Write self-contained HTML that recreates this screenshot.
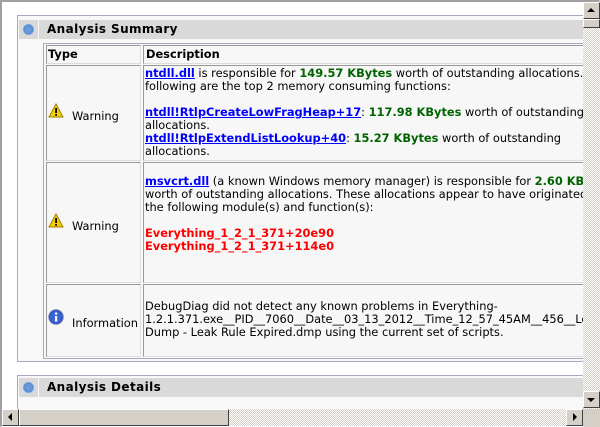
<!DOCTYPE html>
<html><head><style>
*{margin:0;padding:0;box-sizing:border-box}
body{width:600px;height:427px;overflow:hidden;background:#fff;font-family:"DejaVu Sans","Liberation Sans",sans-serif;font-size:11.4px;color:#000;position:relative}
.frame{position:absolute;left:0;top:0;width:600px;height:427px;border-top:2px solid #a0a0a0;border-left:2px solid #a0a0a0;border-right:1px solid #fff;border-bottom:1px solid #fff}
.abs{position:absolute}
.sec{position:absolute;left:17px;width:580px;border:1px solid #a8a8c0;background:#f8f8f8}
.hdr{position:absolute;height:19px;background:#d9d9d9;font-weight:bold;font-size:12px;line-height:19px;padding-left:8px;letter-spacing:0.4px}
.ic{position:absolute;width:19px;height:19px;background:#d9d9d9}
.ic:after{content:"";position:absolute;left:4px;top:4px;width:11px;height:11px;border-radius:50%;background:radial-gradient(circle at 50% 50%,#6fa0e0 0,#5a8fd8 60%,#a8c4ee 75%,#5a8fd8 100%)}
.cell{position:absolute;border:1px solid #999;border-right-color:#ddd;border-bottom-color:#ddd;background:#f7f7f7}
.t{position:absolute;line-height:13px;white-space:nowrap}
a{color:#00f;font-weight:bold;text-decoration:underline}
.g{color:#006400;font-weight:bold}
.r{color:#f00;font-weight:bold}
.sb{background:repeating-conic-gradient(#fff 0 25%,#d4d0c8 0 50%) 0 0/2px 2px}
.btn{position:absolute;width:17px;height:17px;background:#d4d0c8;border:1px solid;border-color:#fff #404040 #404040 #fff}
</style></head><body>
<div class="frame"></div>
<div class="sec" style="top:15px;height:347px">
</div>
<div class="ic" style="left:19px;top:20px"></div>
<div class="hdr" style="left:39px;top:20px;width:544px">Analysis Summary</div>
<div class="abs" style="left:43px;top:43px;width:545px;height:316px;border:1px solid #a8a8c0;background:#f8f8f8"></div>
<div class="cell" style="left:46px;top:45px;width:95px;height:19px"></div>
<div class="cell" style="left:143px;top:45px;width:450px;height:19px"></div>
<div class="t" style="left:48px;top:48px;font-weight:bold">Type</div>
<div class="t" style="left:146px;top:48px;font-weight:bold">Description</div>

<div class="cell" style="left:46px;top:65px;width:95px;height:96px"></div>
<div class="cell" style="left:143px;top:65px;width:450px;height:96px"></div>
<svg class="abs" style="left:48px;top:103px" width="16" height="15"><path d="M8 1 L15 14 L1 14 Z" fill="#f5d000" stroke="#a08000" stroke-width="1"/><rect x="7.2" y="5" width="1.8" height="5" fill="#000"/><rect x="7.2" y="11" width="1.8" height="1.8" fill="#000"/></svg>
<div class="t" style="left:72px;top:110px">Warning</div>
<div class="t" style="left:145px;top:67px"><a>ntdll.dll</a> is responsible for <span class="g">149.57 KBytes</span> worth of outstanding allocations. The<br>following are the top 2 memory consuming functions:<br><br><a>ntdll!RtlpCreateLowFragHeap+17</a>: <span class="g">117.98 KBytes</span> worth of outstanding<br>allocations.<br><a>ntdll!RtlpExtendListLookup+40</a>: <span class="g">15.27 KBytes</span> worth of outstanding<br>allocations.</div>

<div class="cell" style="left:46px;top:162px;width:95px;height:121px"></div>
<div class="cell" style="left:143px;top:162px;width:450px;height:121px"></div>
<svg class="abs" style="left:48px;top:213px" width="16" height="15"><path d="M8 1 L15 14 L1 14 Z" fill="#f5d000" stroke="#a08000" stroke-width="1"/><rect x="7.2" y="5" width="1.8" height="5" fill="#000"/><rect x="7.2" y="11" width="1.8" height="1.8" fill="#000"/></svg>
<div class="t" style="left:72px;top:220px">Warning</div>
<div class="t" style="left:145px;top:175px"><a>msvcrt.dll</a> (a known Windows memory manager) is responsible for <span class="g">2.60 KBytes</span><br>worth of outstanding allocations. These allocations appear to have originated from<br>the following module(s) and function(s):<br><br><span class="r">Everything_1_2_1_371+20e90</span><br><span class="r">Everything_1_2_1_371+114e0</span></div>

<div class="cell" style="left:46px;top:284px;width:95px;height:73px"></div>
<div class="cell" style="left:143px;top:284px;width:450px;height:73px"></div>
<svg class="abs" style="left:48px;top:309px" width="16" height="16"><circle cx="8" cy="8" r="7.2" fill="#2a4fc0" stroke="#6c7fb0"/><circle cx="8" cy="8" r="5.8" fill="#3a63d8"/><rect x="7" y="7" width="2.2" height="5.5" fill="#fff"/><circle cx="8.1" cy="4.6" r="1.2" fill="#fff"/></svg>
<div class="t" style="left:72px;top:317px">Information</div>
<div class="t" style="left:145px;top:300px">DebugDiag did not detect any known problems in Everything-<br>1.2.1.371.exe__PID__7060__Date__03_13_2012__Time_12_57_45AM__456__Leak<br>Dump - Leak Rule Expired.dmp using the current set of scripts.</div>

<div class="sec" style="top:375px;height:40px"></div>
<div class="ic" style="left:19px;top:378px"></div>
<div class="hdr" style="left:39px;top:378px;width:544px">Analysis Details</div>

<div class="abs sb" style="left:583px;top:2px;width:17px;height:407px"></div>
<div class="btn" style="left:583px;top:2px"></div>
<div class="abs" style="left:587px;top:8px;width:0;height:0;border-left:4px solid transparent;border-right:4px solid transparent;border-bottom:4px solid #000"></div>
<div class="btn" style="left:583px;top:19px;height:9px"></div>
<div class="btn" style="left:583px;top:391px"></div>
<div class="abs" style="left:587px;top:398px;width:0;height:0;border-left:4px solid transparent;border-right:4px solid transparent;border-top:4px solid #000"></div>
<div class="abs sb" style="left:2px;top:409px;width:581px;height:17px"></div>
<div class="btn" style="left:2px;top:409px"></div>
<div class="abs" style="left:8px;top:413px;width:0;height:0;border-top:4px solid transparent;border-bottom:4px solid transparent;border-right:4px solid #000"></div>
<div class="btn" style="left:19px;top:409px;width:210px"></div>
<div class="btn" style="left:566px;top:409px"></div>
<div class="abs" style="left:573px;top:413px;width:0;height:0;border-top:4px solid transparent;border-bottom:4px solid transparent;border-left:4px solid #000"></div>
<div class="abs" style="left:583px;top:409px;width:17px;height:18px;background:#d4d0c8"></div>
</body></html>
